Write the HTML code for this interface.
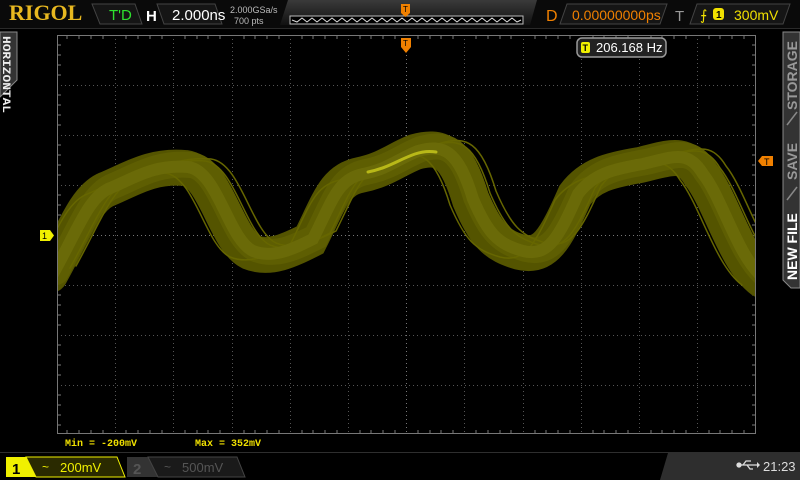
<!DOCTYPE html>
<html><head><meta charset="utf-8"><style>
body{margin:0;width:800px;height:480px;background:#000;overflow:hidden;position:relative;font-family:"Liberation Sans",sans-serif}
.a{position:absolute}
</style></head><body>
<svg class="a" style="left:0;top:0" width="800" height="480">
<defs>
<linearGradient id="tb" x1="0" y1="0" x2="0" y2="1"><stop offset="0" stop-color="#3a3a3a"/><stop offset="1" stop-color="#111"/></linearGradient>
</defs>
<rect x="0" y="0" width="800" height="28" fill="#0a0a0a"/>
<line x1="0" y1="28.5" x2="800" y2="28.5" stroke="#2a2a2a"/>
<text x="9" y="20" font-family="Liberation Serif,serif" font-weight="bold" font-size="22" fill="#e8b820">RIGOL</text>
<polygon points="92,4 135,4 142,24 100,24" fill="#151515" stroke="#444"/>
<text x="109" y="20" font-size="15" fill="#2ee02e">T'D</text>
<text x="146" y="21" font-size="15" font-weight="bold" fill="#fff">H</text>
<polygon points="157,4 215,4 222,24 164,24" fill="#151515" stroke="#444"/>
<text x="172" y="20" font-size="15" fill="#fff">2.000ns</text>
<text x="230" y="13" font-size="9" fill="#bbb">2.000GSa/s</text>
<text x="234" y="24" font-size="9" fill="#bbb">700  pts</text>
<polygon points="288,0 537,0 530,25 280,25" fill="url(#tb)"/>
<rect x="290" y="16" width="233" height="8" fill="#000" stroke="#bbb"/>
<polyline points="292,20 297,22 302,18 307,22 312,18 317,22 322,18 327,22 332,18 337,22 342,18 347,22 352,18 357,22 362,18 367,22 372,18 377,22 382,18 387,22 392,18 397,22 402,18 407,22 412,18 417,22 422,18 427,22 432,18 437,22 442,18 447,22 452,18 457,22 462,18 467,22 472,18 477,22 482,18 487,22 492,18 497,22 502,18 507,22 512,18 517,22 521,20" fill="none" stroke="#ddd" stroke-width="1"/>
<rect x="401" y="4" width="9" height="9" fill="#f08000"/><polygon points="401,13 410,13 405.5,17" fill="#f08000"/>
<text x="403" y="12" font-size="8" fill="#000">T</text>
<text x="546" y="21" font-size="16" fill="#f08000">D</text>
<polygon points="567,4 667,4 660,24 560,24" fill="#151515" stroke="#444"/>
<text x="572" y="20" font-size="14" fill="#f08000">0.00000000ps</text>
<text x="675" y="21" font-size="15" fill="#999">T</text>
<polygon points="697,4 790,4 783,24 690,24" fill="#151515" stroke="#444"/>
<text x="700" y="20" font-size="14" fill="#f0e000">⨍</text>
<rect x="713" y="8" width="11" height="12" rx="3" fill="#f0e000"/><text x="716" y="18" font-size="10" fill="#000" font-weight="bold">1</text>
<text x="734" y="20" font-size="14" fill="#f0e000">300mV</text>
<g stroke="#555" stroke-dasharray="1,3" stroke-width="1">
<line x1="115.5" y1="35" x2="115.5" y2="434"/><line x1="173.5" y1="35" x2="173.5" y2="434"/><line x1="232.5" y1="35" x2="232.5" y2="434"/><line x1="290.5" y1="35" x2="290.5" y2="434"/><line x1="348.5" y1="35" x2="348.5" y2="434"/><line x1="464.5" y1="35" x2="464.5" y2="434"/><line x1="523.5" y1="35" x2="523.5" y2="434"/><line x1="581.5" y1="35" x2="581.5" y2="434"/><line x1="639.5" y1="35" x2="639.5" y2="434"/><line x1="697.5" y1="35" x2="697.5" y2="434"/>
<line x1="57" y1="85.5" x2="756" y2="85.5"/><line x1="57" y1="135.5" x2="756" y2="135.5"/><line x1="57" y1="185.5" x2="756" y2="185.5"/><line x1="57" y1="285.5" x2="756" y2="285.5"/><line x1="57" y1="335.5" x2="756" y2="335.5"/><line x1="57" y1="385.5" x2="756" y2="385.5"/>
</g>
<g stroke="#777" stroke-width="1">
<line x1="406.5" y1="35" x2="406.5" y2="434" stroke-dasharray="1,3"/>
<line x1="57" y1="235.5" x2="756" y2="235.5" stroke-dasharray="1,3"/>
<rect x="57.5" y="35.5" width="698" height="398" fill="none"/>
</g>
<g stroke="#777">
<path d="M67,35v4M79,35v4M91,35v4M103,35v4M126,35v4M138,35v4M150,35v4M162,35v4M185,35v4M197,35v4M208,35v4M220,35v4M244,35v4M255,35v4M267,35v4M279,35v4M302,35v4M313,35v4M325,35v4M337,35v4M360,35v4M371,35v4M383,35v4M395,35v4M418,35v4M430,35v4M441,35v4M453,35v4M476,35v4M488,35v4M500,35v4M511,35v4M535,35v4M546,35v4M558,35v4M570,35v4M593,35v4M604,35v4M616,35v4M628,35v4M651,35v4M662,35v4M674,35v4M686,35v4M709,35v4M720,35v4M732,35v4M744,35v4"/>
<path d="M67,434v-4M79,434v-4M91,434v-4M103,434v-4M126,434v-4M138,434v-4M150,434v-4M162,434v-4M185,434v-4M197,434v-4M208,434v-4M220,434v-4M244,434v-4M255,434v-4M267,434v-4M279,434v-4M302,434v-4M313,434v-4M325,434v-4M337,434v-4M360,434v-4M371,434v-4M383,434v-4M395,434v-4M418,434v-4M430,434v-4M441,434v-4M453,434v-4M476,434v-4M488,434v-4M500,434v-4M511,434v-4M535,434v-4M546,434v-4M558,434v-4M570,434v-4M593,434v-4M604,434v-4M616,434v-4M628,434v-4M651,434v-4M662,434v-4M674,434v-4M686,434v-4M709,434v-4M720,434v-4M732,434v-4M744,434v-4"/>
<path d="M57,45h4M57,55h4M57,65h4M57,75h4M57,95h4M57,105h4M57,115h4M57,125h4M57,145h4M57,155h4M57,165h4M57,175h4M57,195h4M57,205h4M57,215h4M57,225h4M57,245h4M57,255h4M57,265h4M57,275h4M57,295h4M57,305h4M57,315h4M57,325h4M57,345h4M57,355h4M57,365h4M57,375h4M57,395h4M57,405h4M57,415h4M57,425h4"/>
<path d="M756,45h-4M756,55h-4M756,65h-4M756,75h-4M756,95h-4M756,105h-4M756,115h-4M756,125h-4M756,145h-4M756,155h-4M756,165h-4M756,175h-4M756,195h-4M756,205h-4M756,215h-4M756,225h-4M756,245h-4M756,255h-4M756,265h-4M756,275h-4M756,295h-4M756,305h-4M756,315h-4M756,325h-4M756,345h-4M756,355h-4M756,365h-4M756,375h-4M756,395h-4M756,405h-4M756,415h-4M756,425h-4"/>
</g>
<clipPath id="cp"><rect x="58" y="36" width="697" height="397"/></clipPath>
<g clip-path="url(#cp)" fill="none" stroke-linecap="round">
<path d="M50,275 C75,230 85,200 105,190 C130,180 150,165 185,168 C215,172 225,240 250,252 C270,260 290,250 310,240 C330,200 335,180 360,175 C385,170 395,160 415,152 C440,145 455,150 470,200 C485,235 495,245 520,252 C545,258 555,240 575,195 C590,175 610,170 640,165 C670,158 685,150 700,175 C720,200 735,260 762,280" stroke="#545400" stroke-width="36"/>
<path transform="translate(6,-3)" d="M50,275 C75,230 85,200 105,190 C130,180 150,165 185,168 C215,172 225,240 250,252 C270,260 290,250 310,240 C330,200 335,180 360,175 C385,170 395,160 415,152 C440,145 455,150 470,200 C485,235 495,245 520,252 C545,258 555,240 575,195 C590,175 610,170 640,165 C670,158 685,150 700,175 C720,200 735,260 762,280" stroke="#5e5e02" stroke-width="26"/>
<g stroke="#666600" stroke-width="1.5">
<path transform="translate(20,-7)" d="M50,275 C75,230 85,200 105,190 C130,180 150,165 185,168 C215,172 225,240 250,252 C270,260 290,250 310,240 C330,200 335,180 360,175 C385,170 395,160 415,152 C440,145 455,150 470,200 C485,235 495,245 520,252 C545,258 555,240 575,195 C590,175 610,170 640,165 C670,158 685,150 700,175 C720,200 735,260 762,280"/>
<path transform="translate(26,-9)" d="M50,275 C75,230 85,200 105,190 C130,180 150,165 185,168 C215,172 225,240 250,252 C270,260 290,250 310,240 C330,200 335,180 360,175 C385,170 395,160 415,152 C440,145 455,150 470,200 C485,235 495,245 520,252 C545,258 555,240 575,195 C590,175 610,170 640,165 C670,158 685,150 700,175 C720,200 735,260 762,280"/>
<path transform="translate(-20,5)" d="M50,275 C75,230 85,200 105,190 C130,180 150,165 185,168 C215,172 225,240 250,252 C270,260 290,250 310,240 C330,200 335,180 360,175 C385,170 395,160 415,152 C440,145 455,150 470,200 C485,235 495,245 520,252 C545,258 555,240 575,195 C590,175 610,170 640,165 C670,158 685,150 700,175 C720,200 735,260 762,280"/>
</g>
<path transform="translate(3,-1)" d="M50,275 C75,230 85,200 105,190 C130,180 150,165 185,168 C215,172 225,240 250,252 C270,260 290,250 310,240 C330,200 335,180 360,175 C385,170 395,160 415,152 C440,145 455,150 470,200 C485,235 495,245 520,252 C545,258 555,240 575,195 C590,175 610,170 640,165 C670,158 685,150 700,175 C720,200 735,260 762,280" stroke="#6a6a08" stroke-width="12"/>
<path d="M368,172 C388,168 398,160 415,154 C424,151 430,151 436,152" stroke="#b8b818" stroke-width="3"/>
</g>
<rect x="40" y="230" width="10" height="11" fill="#f0f000"/><polygon points="50,230 54,235.5 50,241" fill="#f0f000"/>
<text x="42" y="239" font-size="9" fill="#000">1</text>
<rect x="401" y="38" width="10" height="9" fill="#f08000"/><polygon points="401,47 411,47 406,53" fill="#f08000"/>
<text x="403" y="46" font-size="8" fill="#000">T</text>
<rect x="762" y="156" width="11" height="10" fill="#f08000"/><polygon points="762,156 758,161 762,166" fill="#f08000"/>
<text x="764" y="165" font-size="9" fill="#000">T</text>
<rect x="577" y="38" width="89" height="19" rx="5" fill="#222" stroke="#999" stroke-width="1.5"/>
<rect x="581" y="42" width="9" height="11" rx="2" fill="#f0f000"/><text x="582.5" y="51" font-size="9" fill="#000" font-weight="bold">T</text>
<text x="596" y="52" font-size="13" fill="#fff">206.168 Hz</text>
<polygon points="0,32 17,32 17,80 0,97" fill="#333" stroke="#888"/>
<text transform="translate(3,36) rotate(90)" font-size="11" font-weight="bold" fill="#eee" font-family="Liberation Mono,monospace" textLength="77" lengthAdjust="spacingAndGlyphs">HORIZONTAL</text>
<polygon points="783,32 800,32 800,288 791,288 783,280" fill="#333" stroke="#888"/>
<g font-weight="bold" font-size="14">
<text transform="translate(797,110) rotate(-90)" fill="#999">STORAGE</text>
<text transform="translate(797,180) rotate(-90)" fill="#999">SAVE</text>
<text transform="translate(797,280) rotate(-90)" fill="#fff">NEW FILE</text>
</g>
<line x1="787" y1="125" x2="797" y2="112" stroke="#888" stroke-width="1.5"/>
<line x1="787" y1="200" x2="797" y2="187" stroke="#888" stroke-width="1.5"/>
<text x="65" y="446" font-size="10" fill="#f0e000" font-family="Liberation Mono,monospace" font-weight="bold">Min = -200mV</text>
<text x="195" y="446" font-size="10" fill="#f0e000" font-family="Liberation Mono,monospace" font-weight="bold">Max = 352mV</text>
<rect x="0" y="452" width="800" height="28" fill="#2e2e2e"/>
<polygon points="0,453 668,453 660,480 0,480" fill="#000"/>
<polygon points="6,457 26,457 36,477 6,477" fill="#f0f000"/>
<polygon points="26,457 117,457 125,477 36,477" fill="#2a2a00" stroke="#f0f000"/>
<text x="12" y="474" font-size="15" font-weight="bold" fill="#000">1</text>
<text x="42" y="471" font-size="12" fill="#f0f000">~</text>
<text x="60" y="472" font-size="13" fill="#f0f000">200mV</text>
<polygon points="127,457 148,457 158,477 127,477" fill="#333"/>
<polygon points="148,457 237,457 245,477 158,477" fill="#1a1a1a" stroke="#444"/>
<text x="133" y="474" font-size="15" font-weight="bold" fill="#555">2</text>
<text x="164" y="471" font-size="12" fill="#555">~</text>
<text x="182" y="472" font-size="13" fill="#555">500mV</text>
<g stroke="#ddd" stroke-width="1.3" fill="#ddd">
<circle cx="739" cy="465" r="2"/><line x1="739" y1="465" x2="757" y2="465"/><polygon points="757,462 760,465 757,468" stroke="none"/>
<polyline points="743,465 746,461 751,461" fill="none"/><polyline points="747,465 750,469 753,469" fill="none"/>
</g>
<text x="763" y="471" font-size="13" fill="#ddd">21:23</text>
</svg>
</body></html>
